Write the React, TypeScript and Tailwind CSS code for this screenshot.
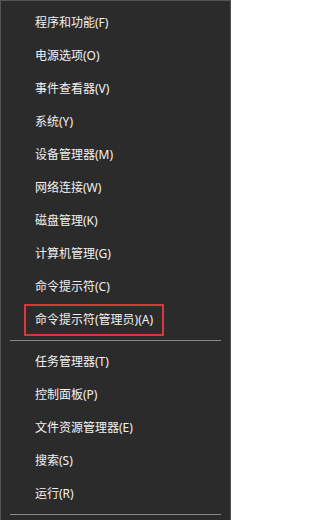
const groups: string[][] = [
  [
    "程序和功能(F)",
    "电源选项(O)",
    "事件查看器(V)",
    "系统(Y)",
    "设备管理器(M)",
    "网络连接(W)",
    "磁盘管理(K)",
    "计算机管理(G)",
    "命令提示符(C)",
    "命令提示符(管理员)(A)",
  ],
  ["任务管理器(T)", "控制面板(P)", "文件资源管理器(E)", "搜索(S)", "运行(R)"],
]

const highlighted = "命令提示符(管理员)(A)"

function MenuItem({ label }: { label: string }) {
  if (label === highlighted) {
    return (
      <div className="h-[33px] pl-[23px] pt-px">
        <div className="h-[32px] w-[140px] border-2 border-[#d6383d] pl-[9px] flex items-center">
          {label}
        </div>
      </div>
    )
  }
  return <div className="h-[33px] pl-[34px] flex items-center">{label}</div>
}

export default function App() {
  return (
    <div
      className="w-[231px] h-[520px] overflow-hidden bg-[#2b2b2b] border border-b-0 border-[#555555] pt-[5px] text-[12px] text-[#f2f2f2]"
      style={{ fontFamily: '"Noto Sans", "Noto Sans CJK SC", sans-serif' }}
    >
      {groups.map((items, i) => (
        <div key={i}>
          {i > 0 && <div className="h-[4px]" />}
          {items.map((label) => (
            <MenuItem key={label} label={label} />
          ))}
          <div className="mx-[9px] mt-[4px] h-px bg-[#8a8a8a]" />
        </div>
      ))}
    </div>
  )
}
